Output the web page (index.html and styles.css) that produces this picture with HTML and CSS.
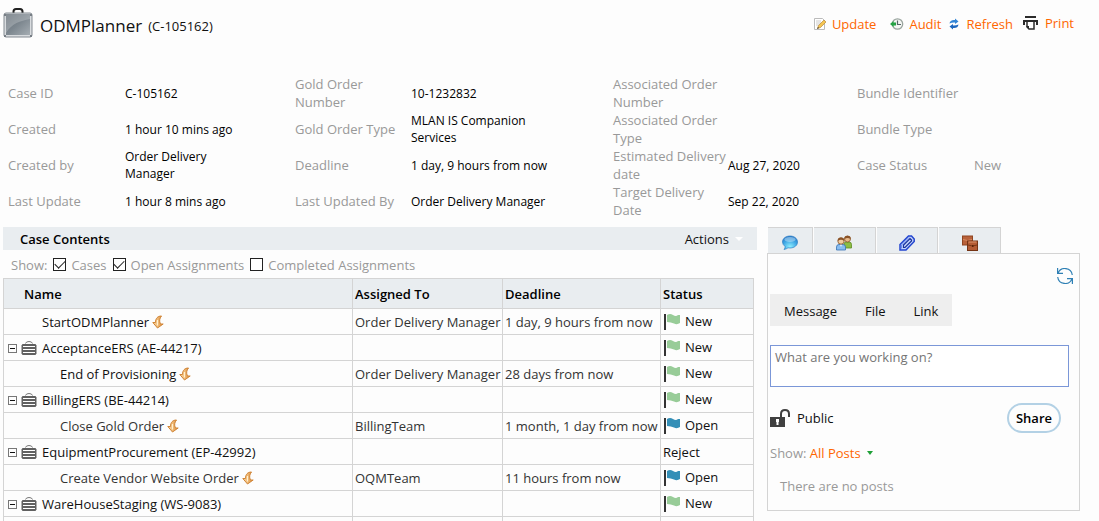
FILE: index.html
```html
<!DOCTYPE html>
<html lang="en">
<head>
<meta charset="utf-8">
<title>ODMPlanner (C-105162)</title>
<link rel="stylesheet" href="styles.css">
</head>
<body>
<svg class="sprite" aria-hidden="true">
  <defs>
    <linearGradient id="metal" x1="0" y1="0" x2="1" y2="1"><stop offset="0" stop-color="#626c75"/><stop offset=".5" stop-color="#7d878f"/><stop offset="1" stop-color="#a5adb3"/></linearGradient>
    <linearGradient id="gold" x1="0" y1="0" x2="1" y2="0"><stop offset="0" stop-color="#ffdca6"/><stop offset="1" stop-color="#dc8e3a"/></linearGradient>
    <radialGradient id="bubble" cx=".5" cy=".8" r=".8"><stop offset="0" stop-color="#8ff0ff"/><stop offset=".6" stop-color="#3fa6e4"/><stop offset="1" stop-color="#2b78c6"/></radialGradient>
    <symbol id="bolt" viewBox="0 0 12 14"><path d="M9.500 1C5.500 1 3.500 3.500 3.500 7.500H.8L5.500 13l5.700-4H8.500C7 6 7.500 3.500 9.500 1z" fill="url(#gold)" stroke="#cf8437" stroke-width="1"/><path d="M5.500 5v5.500" stroke="#fff0d0" stroke-width="1.200"/></symbol>
    <symbol id="case" viewBox="0 0 16 14"><path d="M4.500 2.500Q5 .5 8 .5t3.500 2" fill="none" stroke="#777"/><path d="M1.500 3h13l1 1.500v8l-1 1.500h-13l-1-1.500v-8z" fill="#606060"/><path d="M2 5.500h12M2 8.500h12M2 11.500h12" stroke="#fff"/></symbol>
    <symbol id="flag" viewBox="0 0 16 16"><path d="M0 0h2v16H0z" fill="#333"/><path d="M3 1q3-2 6 0T14 1H16v8q-3 2-6 .5T3 8z" fill="currentColor"/></symbol>
  </defs>
</svg>

<header class="page-header">
  <div class="title">
    <svg class="title-icon" viewBox="0 0 30 30"><path d="M10.500 5V3.500Q10.500 1 13 1h4q2.500 0 2.500 2.500V5" fill="none" stroke="#222" stroke-width="2"/><rect x="1" y="5" width="28" height="24" rx="2" fill="#d9dcdf" stroke="#838a91"/><rect x="3" y="6" width="24" height="21" fill="url(#metal)"/><path d="M3 25C9 15 17 13 27 11V6H3z" fill="#fff" opacity=".22"/><path d="M1 6h2v2H1zM27 6h2v2h-2zM1 27h2v2H1zM27 27h2v2h-2z" fill="#777e85"/></svg>
    <h1>ODMPlanner<small>(C-105162)</small></h1>
  </div>
  <nav class="tools">
    <a href="#" class="tool"><svg class="tool-icon" viewBox="0 0 14 14"><path d="M1.500 1.500h8l2 2v9h-10z" fill="#fff" stroke="#bbb"/><path d="M3 4h5M3 6h5M3 8h3" stroke="#ccc"/><path d="M4.500 11.500l1-3L11 3l2 2-5.500 5.500z" fill="#f4c552" stroke="#b98a3c" stroke-width=".7"/><path d="M4 12l1-2 1 1z" fill="#333"/></svg>Update</a>
    <a href="#" class="tool tool-audit"><svg class="tool-icon" viewBox="0 0 14 14"><circle cx="7.500" cy="7" r="5.200" fill="#f4f6f4" stroke="#9aa59f" stroke-width="1.300"/><path d="M7.500 3.500V7.500H11" fill="none" stroke="#566" stroke-width="1.200"/><path d="M0 7l3.500-3v1.500H6v3H3.500V10z" fill="#25a244"/></svg>Audit</a>
    <a href="#" class="tool tool-refresh"><svg class="tool-icon small" viewBox="0 0 10 12"><path d="M.5 5.500Q1 2 5 2h1V.5L9.500 3.500 6 6V4.500H5Q2.500 4.500.5 5.500z" fill="#3184d6"/><path d="M9.500 6.500Q9 10 5 10H4v1.500L.5 8.500 4 6v1.500h1Q7.500 7.500 9.500 6.500z" fill="#1c66be"/></svg>Refresh</a>
    <a href="#" class="tool tool-print"><svg class="tool-icon large" viewBox="0 0 15 14"><path d="M2 1h11" stroke="#2b2b2b" stroke-width="2"/><path d="M0 4h15v5h-2V6H2v3H0z" fill="#2b2b2b"/><path d="M4 6v5l2 2h5V6" fill="#fff" stroke="#2b2b2b" stroke-width="1.500"/><path d="M3 10h3v3z" fill="#2b2b2b"/></svg>Print</a>
  </nav>
</header>

<dl class="fields">
  <dt>Case ID</dt><dd>C-105162</dd>
  <dt>Gold Order Number</dt><dd>10-1232832</dd>
  <dt>Associated Order Number</dt><dd></dd>
  <dt>Bundle Identifier</dt><dd></dd>
  <dt>Created</dt><dd>1 hour 10 mins ago</dd>
  <dt>Gold Order Type</dt><dd>MLAN IS Companion Services</dd>
  <dt>Associated Order Type</dt><dd></dd>
  <dt>Bundle Type</dt><dd></dd>
  <dt>Created by</dt><dd>Order Delivery Manager</dd>
  <dt>Deadline</dt><dd>1 day, 9 hours from now</dd>
  <dt>Estimated Delivery date</dt><dd>Aug 27, 2020</dd>
  <dt>Case Status</dt><dd class="muted">New</dd>
  <dt>Last Update</dt><dd>1 hour 8 mins ago</dd>
  <dt>Last Updated By</dt><dd>Order Delivery Manager</dd>
  <dt>Target Delivery Date</dt><dd>Sep 22, 2020</dd>
</dl>

<main class="columns">
  <section class="contents">
    <div class="bar"><h2>Case Contents</h2><button class="actions" type="button">Actions<span class="caret"></span></button></div>
    <div class="filters">
      <span class="filters-label">Show:</span>
      <label><input type="checkbox" checked>Cases</label>
      <label><input type="checkbox" checked>Open Assignments</label>
      <label><input type="checkbox">Completed Assignments</label>
    </div>
    <table class="grid">
      <colgroup><col class="col-name"><col class="col-assigned"><col class="col-deadline"><col class="col-status"></colgroup>
      <thead><tr><th class="name-head">Name</th><th>Assigned To</th><th>Deadline</th><th>Status</th></tr></thead>
      <tbody>
        <tr><td><div class="name level-1">StartODMPlanner<svg class="bolt"><use href="#bolt"/></svg></div></td><td>Order Delivery Manager</td><td>1 day, 9 hours from now</td><td><div class="status new"><svg class="flag"><use href="#flag"/></svg><span>New</span></div></td></tr>
        <tr><td><div class="name"><button class="toggle" type="button" aria-label="Collapse"></button><svg class="case"><use href="#case"/></svg>AcceptanceERS (AE-44217)</div></td><td></td><td></td><td><div class="status new"><svg class="flag"><use href="#flag"/></svg><span>New</span></div></td></tr>
        <tr><td><div class="name level-2">End of Provisioning<svg class="bolt"><use href="#bolt"/></svg></div></td><td>Order Delivery Manager</td><td>28 days from now</td><td><div class="status new"><svg class="flag"><use href="#flag"/></svg><span>New</span></div></td></tr>
        <tr><td><div class="name"><button class="toggle" type="button" aria-label="Collapse"></button><svg class="case"><use href="#case"/></svg>BillingERS (BE-44214)</div></td><td></td><td></td><td><div class="status new"><svg class="flag"><use href="#flag"/></svg><span>New</span></div></td></tr>
        <tr><td><div class="name level-2 soft">Close Gold Order<svg class="bolt"><use href="#bolt"/></svg></div></td><td>BillingTeam</td><td>1 month, 1 day from now</td><td><div class="status open"><svg class="flag"><use href="#flag"/></svg><span>Open</span></div></td></tr>
        <tr><td><div class="name"><button class="toggle" type="button" aria-label="Collapse"></button><svg class="case"><use href="#case"/></svg>EquipmentProcurement (EP-42992)</div></td><td></td><td></td><td><div class="status">Reject</div></td></tr>
        <tr><td><div class="name level-2 soft">Create Vendor Website Order<svg class="bolt"><use href="#bolt"/></svg></div></td><td>OQMTeam</td><td>11 hours from now</td><td><div class="status open"><svg class="flag"><use href="#flag"/></svg><span>Open</span></div></td></tr>
        <tr><td><div class="name"><button class="toggle" type="button" aria-label="Collapse"></button><svg class="case"><use href="#case"/></svg>WareHouseStaging (WS-9083)</div></td><td></td><td></td><td><div class="status new"><svg class="flag"><use href="#flag"/></svg><span>New</span></div></td></tr>
        <tr><td></td><td></td><td></td><td></td></tr>
      </tbody>
    </table>
  </section>

  <aside class="social">
    <div class="tabs">
      <button type="button" class="tab tab-first" aria-label="Posts"><svg viewBox="0 0 16 16"><path d="M8 1c4.300 0 7.500 2.500 7.500 6s-3.200 6-7.500 6l-2-.2Q4.500 14 2 14.500 3.500 13 3 11.500 .5 9.500 .5 7c0-3.500 3.200-6 7.500-6z" fill="url(#bubble)" stroke="#2d80c4" stroke-width=".7"/><ellipse cx="8" cy="4.500" rx="5.500" ry="2.500" fill="#fff" opacity=".35"/></svg></button>
      <button type="button" class="tab" aria-label="People"><svg viewBox="0 0 16 16"><path d="M8 13V9q0-2 2.500-2H13q2.500 0 2.500 2.500V13z" fill="#8dbd43" stroke="#5c8c24" stroke-width=".8"/><circle cx="11.500" cy="4" r="3" fill="#e8b98a" stroke="#875326" stroke-width=".8"/><path d="M8.500 4Q8 .8 11.500.8T14.500 4Q11.500 1.800 8.500 4z" fill="#8b5328"/><path d="M.5 15v-3q0-2.500 2.500-2.500h4q2.500 0 2.500 2.500v3z" fill="#88bdf1" stroke="#3672b4" stroke-width=".8"/><path d="M4 9.500L5 12l1-2.500z" fill="#fff"/><circle cx="5" cy="6" r="3.200" fill="#f2cda0" stroke="#875326" stroke-width=".8"/><path d="M1.800 6Q1.500 2.500 5 2.500T8.200 6Q5 3.500 1.800 6z" fill="#8b5328"/></svg></button>
      <button type="button" class="tab" aria-label="Files"><svg viewBox="0 0 16 16" fill="none"><path d="M1 9.500L9.500 1h3l2.700 3v2.500L7 15H1z" fill="#c3d2fa" stroke="#2346cf" stroke-width="1.500"/><path d="M4.500 12.500V10l6.500-6.500 1.500 1.500v1L6 12.500z" stroke="#17319b" stroke-width="1.200"/><path d="M2.500 13.500V10l7.500-7.500" stroke="#6b8cf0"/></svg></button>
      <button type="button" class="tab" aria-label="Related cases"><svg viewBox="0 0 16 16"><rect x=".5" y="1" width="10" height="9" fill="#b8613a" stroke="#8f4520"/><path d="M1 4.500q4.500 2 9 0" fill="none" stroke="#d98a61"/><rect x="5.500" y="6" width="10" height="9.500" fill="#b45c35" stroke="#753313"/><path d="M6 10q4.500 2 9 0" fill="none" stroke="#793716"/><path d="M6.500 7h8" stroke="#dc936d"/><path d="M10 10h1.500v2H10z" fill="#612307"/></svg></button>
    </div>
    <div class="panel">
      <button class="reload" type="button" aria-label="Refresh posts"><svg viewBox="0 0 16 16" fill="none" stroke="#2f80b5" stroke-width="1.200"><path d="M.6 0v5.400H6M1 5.400A7.400 7.400 0 0 1 15.300 7M15.400 16v-5.400H10M15 10.600A7.400 7.400 0 0 1 .7 9"/></svg></button>
      <div class="kinds"><button type="button">Message</button><button type="button">File</button><button type="button">Link</button></div>
      <textarea class="composer" placeholder="What are you working on?" aria-label="Post text"></textarea>
      <div class="share-row">
        <svg class="lock" viewBox="0 0 20 18"><path d="M0 8h15v10H0z" fill="#404040"/><path d="M11 9V5q0-4 4-4t4 4v3" fill="none" stroke="#404040" stroke-width="2"/><path d="M6 10h3v3H8.500v3h-2v-3H6z" fill="#fff"/></svg>
        <span>Public</span>
        <button class="share" type="button">Share</button>
      </div>
      <div class="show-posts">Show: <button type="button">All Posts<span class="caret green"></span></button></div>
      <p class="empty">There are no posts</p>
    </div>
  </aside>
</main>
</body>
</html>
```

FILE: styles.css
```css
* { box-sizing: border-box; }

html { height: 100%; overflow: hidden; }

body {
  margin: 0;
  padding: 0 19px 0 3px;
  background: #fdfdfd;
  color: #111;
  font: 13px/18px "Open Sans", sans-serif;
}

.sprite { position: absolute; width: 0; height: 0; }

button {
  margin: 0;
  padding: 0;
  border: 0;
  background: none;
  color: inherit;
  font: inherit;
}

svg { flex: none; display: block; }

.page-header {
  display: flex;
  justify-content: space-between;
  align-items: flex-start;
  height: 75px;
}

.title { display: flex; gap: 7px; padding-top: 8px; }
.title-icon { width: 30px; height: 30px; }
h1 { display: flex; align-items: center; gap: 6px; margin: 0; padding-top: 5px; font-size: 17px; line-height: 26px; font-weight: 400; }
h1 small { font-size: 13px; }

.tools { display: flex; padding: 15px 6px 0 0; }
.tool { display: flex; align-items: center; gap: 5px; height: 18px; color: #ff6600; text-decoration: none; }
.tool-icon { width: 14px; height: 14px; }
.tool-icon.small { width: 10px; height: 12px; }
.tool-icon.large { width: 15px; height: 14px; }
.tool-audit { margin-left: 14px; }
.tool-refresh { margin-left: 8px; gap: 7px; }
.tool-print { height: 16px; margin-left: 10px; gap: 7px; }

.fields {
  display: grid;
  grid-template-columns:
    minmax(0, 117fr) minmax(0, 170fr) minmax(0, 116fr) minmax(0, 202fr)
    minmax(0, 115fr) minmax(0, 129fr) minmax(0, 117fr) minmax(0, 106fr);
  grid-auto-rows: minmax(36px, auto);
  align-items: center;
  margin: 0;
  padding-left: 5px;
}
.fields dt { color: #999; }
.fields dd { margin: 0; padding-right: 45px; font-size: 12px; line-height: 17px; color: #000; }
.fields .muted { color: #999; font-size: 13px; }

.columns {
  display: grid;
  grid-template-columns: minmax(0, 754fr) minmax(0, 313fr);
  gap: 10px;
  align-items: start;
  padding-top: 8px;
}

.bar {
  display: flex;
  justify-content: space-between;
  align-items: center;
  height: 23px;
  padding: 0 14px 0 17px;
  background: #e9edf0;
}
h2 { margin: 0; font-size: 13px; line-height: 18px; font-weight: 600; color: #000; }
.actions { display: flex; align-items: center; gap: 6px; }
.caret { display: inline-block; border: 4px solid transparent; border-top-color: #fff; border-bottom: 0; }
.caret.green { border-width: 4px 3px 0; border-top-color: #1fa038; }

.filters { display: flex; align-items: center; gap: 6px; height: 28px; padding: 1px 0 0 8px; color: #999; }
.filters label { display: flex; align-items: center; gap: 5px; }
.filters input {
  appearance: none;
  display: grid;
  place-items: center;
  width: 13px;
  height: 13px;
  margin: 0;
  border: 1px solid #222;
  background: #fff;
}
.filters input:checked::before {
  content: "";
  width: 9px;
  height: 5px;
  margin-bottom: 3px;
  border: solid #222;
  border-width: 0 0 1px 1px;
  transform: rotate(-45deg);
}

.grid { width: calc(100% - 3px); border-collapse: collapse; table-layout: fixed; }
.col-name { width: 349px; }
.col-assigned { width: 150px; }
.col-deadline { width: 158px; }
.grid th, .grid td { height: 26px; padding: 0 0 0 2px; border: 1px solid #d4d4d4; white-space: nowrap; text-align: left; }
.grid th { height: 30px; background: #e9edf0; color: #000; font-weight: 600; }
.grid td { color: #333; padding-top: 1px; }
.grid .name-head { padding-left: 20px; }

.grid .name { display: flex; align-items: center; height: 18px; padding-left: 2px; color: #111; }
.grid .level-1 { padding-left: 36px; }
.grid .level-2 { padding-left: 54px; }
.grid .soft { color: #333; }
.bolt { width: 12px; height: 14px; margin-left: 3px; }
.toggle { position: relative; width: 9px; height: 9px; border: 1px solid #777; }
.toggle::before { content: ""; position: absolute; inset: 3px 1px; background: #111; }
.case { width: 16px; height: 14px; margin: 0 5px 0 4px; }
.status { display: flex; align-items: center; gap: 5px; height: 18px; color: #111; }
.status span { padding-bottom: 2px; }
.flag { width: 16px; height: 16px; margin-left: 1px; }
.new .flag { color: #98cc98; }
.open .flag { color: #348fb7; }

.tabs { display: flex; gap: 1px; height: 26px; padding: 0 79px 0 1px; }
.tab { flex: 62; display: grid; place-items: center; padding-top: 5px; border: solid #d4d4d4; border-width: 1px 1px 0 0; background: #e9edf0; }
.tab-first { flex: 45; }
.tab svg { width: 16px; height: 16px; }

.panel { display: flex; flex-direction: column; min-height: 258px; padding: 14px 10px 15px 2px; border: 1px solid #d4d4d4; }
.reload { align-self: flex-end; margin-right: -4px; }
.reload svg { width: 16px; height: 16px; }
.kinds { display: flex; gap: 28px; align-self: flex-start; margin-top: 10px; padding: 8px 14px 6px; background: #eee; }
.composer {
  display: block;
  width: 100%;
  height: 42px;
  margin: 19px 0 0;
  padding: 2px 4px;
  border: 1px solid #7b97d8;
  background: #fff;
  color: #111;
  font: inherit;
  resize: none;
}
.composer::placeholder { color: #757575; }
.share-row { display: flex; align-items: center; gap: 7px; margin-top: 16px; padding-right: 8px; }
.lock { width: 20px; height: 18px; }
.share { margin-left: auto; height: 30px; padding: 0 7px; border: 2px solid #b3d1e5; border-radius: 15px; font-weight: 600; color: #000; }
.show-posts { margin-top: 11px; color: #999; }
.show-posts button { color: #ff6600; }
.show-posts .caret { margin: 0 0 3px 6px; }
.empty { margin: 15px 0 0 10px; color: #999; }
```
